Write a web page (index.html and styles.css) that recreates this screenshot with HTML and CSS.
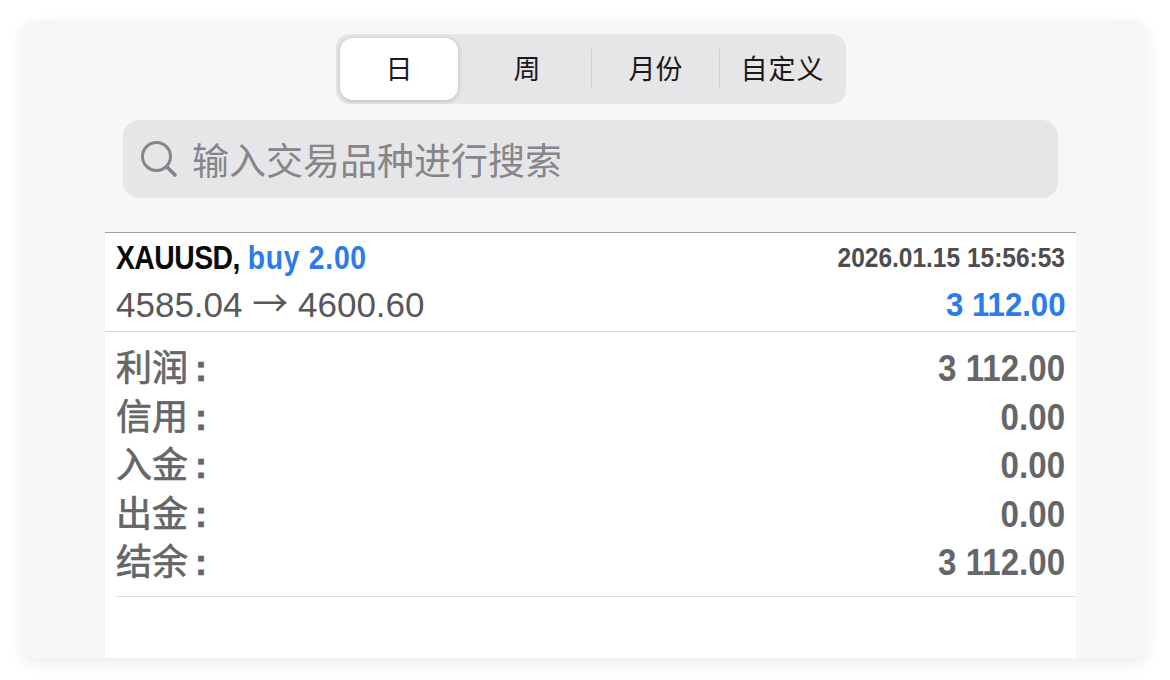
FILE: index.html
```html
<!DOCTYPE html>
<html lang="zh-CN">
<head>
    <meta charset="UTF-8">
    <title>历史</title>
    <link rel="stylesheet" href="styles.css">
</head>
<body>
    <main class="card">
        <div class="segments">
            <span class="segment active">日</span>
            <span class="segment">周</span>
            <span class="divider"></span>
            <span class="segment">月份</span>
            <span class="divider"></span>
            <span class="segment custom">自定义</span>
        </div>
        <div class="search">
            <svg class="search-icon" width="38" height="38" viewBox="0 0 38 38" fill="none" stroke="#86868a" stroke-width="3" stroke-linecap="round">
                <circle cx="16.5" cy="16.5" r="14"/>
                <path d="M27 27 L35 35" stroke-width="3.8"/>
            </svg>
            <span class="search-text">输入交易品种进行搜索</span>
        </div>
        <section class="panel">
            <div class="deal">
                <div class="row">
                    <span class="deal-title"><b class="symbol">XAUUSD,</b> <b class="blue side">buy 2.00</b></span>
                    <span class="deal-time">2026.01.15 15:56:53</span>
                </div>
                <div class="row">
                    <span class="deal-price">4585.04 <span class="arrow">→</span> 4600.60</span>
                    <b class="deal-profit blue">3 112.00</b>
                </div>
            </div>
            <div class="summary">
                <div class="sum-row"><span class="sum-label">利润<i class="colon">:</i></span><b class="sum-value">3 112.00</b></div>
                <div class="sum-row"><span class="sum-label">信用<i class="colon">:</i></span><b class="sum-value">0.00</b></div>
                <div class="sum-row"><span class="sum-label">入金<i class="colon">:</i></span><b class="sum-value">0.00</b></div>
                <div class="sum-row"><span class="sum-label">出金<i class="colon">:</i></span><b class="sum-value">0.00</b></div>
                <div class="sum-row"><span class="sum-label">结余<i class="colon">:</i></span><b class="sum-value">3 112.00</b></div>
            </div>
        </section>
    </main>
</body>
</html>
```

FILE: styles.css
```css
* {
    box-sizing: border-box;
}
html, body {
    height: 100%;
}
body {
    margin: 0;
    padding: 20px 22px 22px;
    background-color: #fff;
    font-family: "Liberation Sans", "Noto Sans CJK SC", sans-serif;
    overflow: hidden;
}
.card {
    height: 638px;
    background-color: #f7f7f7;
    border-radius: 14px;
    box-shadow: 0 6px 16px rgba(0,0,0,0.07);
    padding-top: 14px;
    display: flex;
    flex-direction: column;
    overflow: hidden;
}
.segments {
    align-self: center;
    margin-left: 12px;
    width: 510px;
    height: 70px;
    background-color: #e6e6e8;
    border-radius: 14px;
    padding: 4px 0 4px 4px;
    display: flex;
    align-items: center;
    font-size: 27px;
    color: #1a1a1a;
}
.segment {
    flex: 0 0 auto;
    width: 118px;
    height: 62px;
    text-align: center;
    line-height: 64px;
}
.segment:nth-child(2) {
    width: 128px;
    margin-left: 5px;
}
.segment:nth-child(4) {
    width: 127px;
}
.segment:nth-child(6) {
    width: 125px;
}
.segment.custom {
    letter-spacing: 1px;
}
.segment.active {
    background-color: #fff;
    border-radius: 13px;
    box-shadow: 0 1px 5px rgba(0,0,0,0.2);
}
.divider {
    flex: 0 0 1px;
    height: 40px;
    background-color: #cfcfd1;
}
.search {
    margin: 16px 90px 34px 101px;
    height: 78px;
    background-color: #e6e6e8;
    border-radius: 16px;
    display: flex;
    align-items: center;
    padding-left: 17px;
    color: #86868a;
    font-size: 37px;
}
.search-icon {
    flex: none;
    margin-right: 14px;
}
.panel {
    flex: 1;
    margin: 0 72px 0 83px;
    background-color: #fff;
    border-top: 1px solid #a0a0a0;
}
.deal {
    padding: 1px 11px 0;
    height: 99px;
    border-bottom: 1px solid #d8d8d8;
}
.row {
    display: flex;
    justify-content: space-between;
    align-items: baseline;
    height: 47px;
    line-height: 47px;
}
.deal-title {
    display: inline-block;
    font-size: 33px;
    white-space: nowrap;
    transform: scaleX(0.858);
    transform-origin: left;
}
.symbol {
    color: #0a0a0a;
    letter-spacing: -0.6px;
}
.blue {
    color: #2b7bea;
}
.side {
    letter-spacing: 0.85px;
}
.deal-time {
    display: inline-block;
    font-size: 28px;
    font-weight: 700;
    color: #4d4d4f;
    white-space: nowrap;
    transform: translateY(-2px) scaleX(0.875);
    transform-origin: right;
}
.deal-price {
    font-size: 35px;
    color: #58585a;
}
.arrow {
    font-family: "Noto Sans CJK SC", sans-serif;
    font-size: 36px;
    line-height: 1;
}
.deal-profit {
    display: inline-block;
    font-size: 34px;
    transform: translateY(-1px) scaleX(0.915);
    transform-origin: right;
}
.summary {
    margin-left: 11px;
    height: 265px;
    padding: 13px 11px 0 0;
    border-bottom: 1px solid #dcdcdc;
}
.sum-row {
    display: flex;
    justify-content: space-between;
    align-items: baseline;
    height: 48.5px;
    line-height: 48.5px;
    color: #666668;
}
.sum-label {
    font-size: 36px;
    -webkit-text-stroke: 0.7px #666668;
}
.colon {
    font-style: normal;
    font-weight: 700;
    margin-left: 7px;
}
.sum-value {
    display: inline-block;
    font-size: 36px;
    transform: scaleX(0.92);
    transform-origin: right;
}
```
